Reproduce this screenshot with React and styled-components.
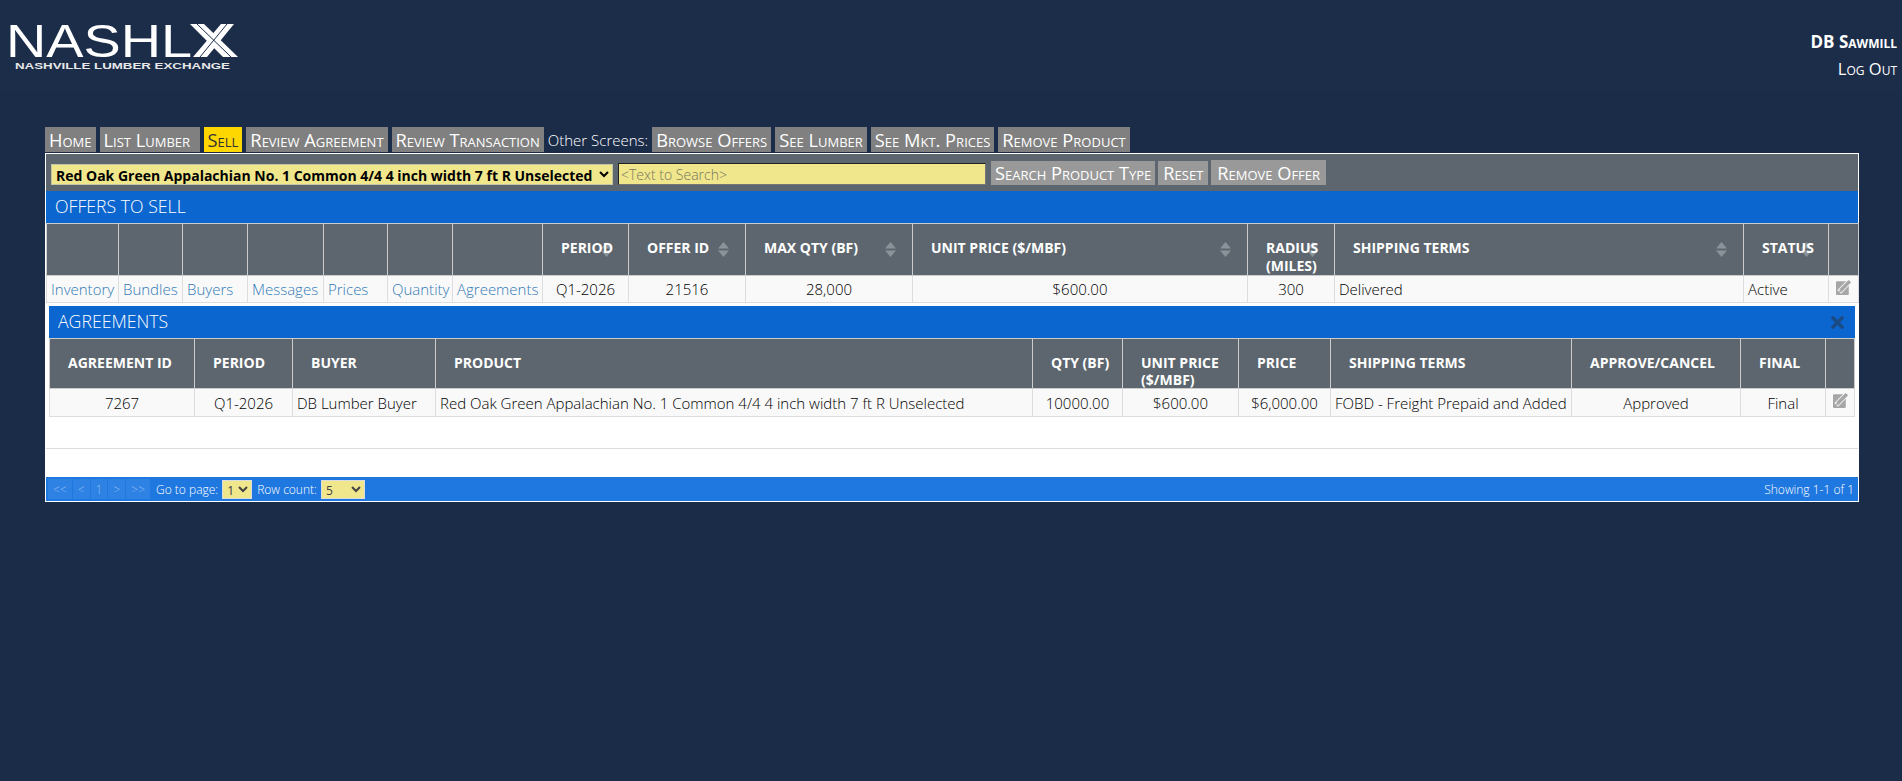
import React from 'react'
import styled, { createGlobalStyle } from 'styled-components'
import { FaTimes } from 'react-icons/fa'

const GlobalStyle = createGlobalStyle`
  html, body {
    margin: 0;
    padding: 0;
    height: 100%;
    background: #1b2c48;
  }
  body {
    font-family: "Open Sans", "Liberation Sans", sans-serif;
    font-size: 14px;
    color: #222;
  }
`

const Page = styled.div`
  min-height: 781px;
  background: #1b2c48;
  overflow: hidden;
`

const Header = styled.header`
  height: 92px;
  display: flex;
  justify-content: space-between;
  background: #1c2d4a;
`

const LogoWrap = styled.div`
  padding: 24px 0 0 10px;
  display: flex;
  flex-direction: column;
  gap: 4px;
`

const UserBox = styled.div`
  padding: 31px 5px 0 0;
  text-align: right;
  color: #fff;
  font-variant: small-caps;
`

const UserName = styled.div`
  font-size: 17px;
  font-weight: 700;
  line-height: 22px;
`

const LogOut = styled.div`
  font-size: 16.5px;
  font-weight: 400;
  line-height: 24px;
  margin-top: 4px;
`

const Content = styled.main`
  padding: 35px 43px 0 45px;
`

const Tabs = styled.nav`
  display: flex;
  align-items: stretch;
  gap: 4px;
  height: 25px;
  margin-bottom: 1px;
`

const Tab = styled.a`
  display: block;
  padding: 0 4px;
  min-width: ${p => p.$w || 0}px;
  box-sizing: border-box;
  background: ${p => (p.$active ? '#ffd700' : '#808080')};
  color: ${p => (p.$active ? '#333' : '#fff')};
  font-size: 18.3px;
  font-weight: 400;
  line-height: 26px;
  font-variant: small-caps;
  white-space: nowrap;
`

const TabLabel = styled.span`
  color: #fff;
  font-size: 15px;
  font-weight: 300;
  line-height: 27px;
  white-space: nowrap;
`

const Panel = styled.section`
  border: 1px solid #fff;
  background: #fff;
`

const Toolbar = styled.div`
  height: 37px;
  box-sizing: border-box;
  padding: 6px 0 6px 5px;
  display: flex;
  align-items: flex-end;
  background: #5d666e;
`

const ProductSelect = styled.select`
  width: 562px;
  height: 21px;
  margin: 0 5px 0 0;
  padding: 0;
  border: 1px solid #c5c5a5;
  border-radius: 0;
  background: #f0e68c;
  color: #000;
  font-family: inherit;
  font-size: 14px;
  font-weight: 700;
`

const SearchInput = styled.input`
  width: 368px;
  height: 22px;
  box-sizing: border-box;
  margin: 0 5px 0 0;
  padding: 0 2px;
  border: 1px solid #777;
  border-top-color: #222;
  border-left-color: #222;
  background: #f0e68c;
  font-family: inherit;
  font-size: 14px;
  font-weight: 300;
  &::placeholder {
    color: #77775f;
    opacity: 1;
  }
`

const ToolButton = styled.button`
  height: ${p => (p.$tall ? 25 : 24)}px;
  margin: 0 3px 0 0;
  padding: 0 ${p => p.$pad || 4}px;
  border: 0;
  background: #999;
  color: #fff;
  font-family: inherit;
  font-size: 18.2px;
  font-weight: 400;
  font-variant: small-caps;
  white-space: nowrap;
`

const TitleBar = styled.div`
  height: 32px;
  padding: 0 ${p => p.$right || 0}px 3px 9px;
  margin: ${p => p.$margin || 0};
  box-sizing: border-box;
  display: flex;
  align-items: center;
  justify-content: space-between;
  background: #0b66d0;
  color: #fff;
  font-size: 17.7px;
  font-weight: 300;
`

const CloseIcon = styled(FaTimes)`
  color: #1b4b86;
  font-size: 19px;
  margin-top: 3px;
`

const Table = styled.table`
  width: ${p => p.$w}px;
  table-layout: fixed;
  border-collapse: collapse;
  margin-left: ${p => p.$left || 0}px;
`

const Th = styled.th`
  position: relative;
  height: ${p => (p.$compact ? 50 : 51)}px;
  box-sizing: border-box;
  padding: 15px 0 0 18px;
  vertical-align: top;
  border: 1px solid #ccc;
  background: #5d666e;
  color: #fff;
  font-size: 14px;
  font-weight: 700;
  line-height: ${p => (p.$compact ? 17 : 18)}px;
  text-align: left;
  text-transform: uppercase;
`

const HeadText = styled.span`
  position: relative;
  z-index: 1;
`

const Td = styled.td`
  height: ${p => (p.$tall ? 28 : 27)}px;
  box-sizing: border-box;
  padding: 0 4px;
  border: 1px solid #ddd;
  background: #f9f9f9;
  color: #000;
  font-size: 15px;
  font-weight: 300;
  line-height: 20px;
  text-align: ${p => (p.$center ? 'center' : 'left')};
  white-space: nowrap;
  overflow: hidden;
`

const LinkCell = styled.a`
  color: #337ab7;
`

const EditSvg = styled.svg`
  display: block;
  width: 16px;
  height: 16px;
  margin: -5px 0 0 3px;
`

const SortArrows = styled.svg`
  position: absolute;
  right: 16px;
  top: 18px;
  width: 11px;
  height: 15px;
  fill: #8b939a;
`

const Spacer = styled.div`
  height: 31px;
  border-bottom: 1px solid #ddd;
  margin: 0 0 28px 0;
`

const DetailWrap = styled.div`
  padding-top: 3px;
`

const Pager = styled.div`
  height: 24px;
  padding: 0 4px 0 2px;
  display: flex;
  align-items: center;
  background: #1f78df;
  color: #fff;
  font-size: 12px;
  font-weight: 300;
`

const PageBtn = styled.span`
  height: 20px;
  padding: 0 5px;
  margin-right: 1px;
  display: flex;
  align-items: center;
  background: #2d82e4;
  color: #8fbcf0;
  font-size: 12px;
`

const PagerLabel = styled.span`
  margin: 0 4px 0 ${p => p.$left || 0}px;
`

const PagerSelect = styled.select`
  width: ${p => p.$w}px;
  height: 19px;
  padding: 0;
  border: 1px solid #ddd;
  border-radius: 0;
  background: #f0e68c;
  color: #444;
  font-family: inherit;
  font-size: 12px;
`

const PagerEnd = styled.span`
  margin-left: auto;
`

const Sort = () => (
  <SortArrows viewBox="0 0 11 15">
    <path d="M5.5 0 L11 6.6 H0 Z M5.5 15 L0 8.4 H11 Z" />
  </SortArrows>
)

const EditIcon = () => (
  <EditSvg viewBox="0 0 15 15">
    <rect x="0" y="2" width="12" height="13" rx="1" fill="#a6a6a6" />
    <path d="M3 12 L12 3" stroke="#f0f0f0" strokeWidth="5" />
    <path d="M4.5 10.5 L13 2" stroke="#a6a6a6" strokeWidth="3.2" />
    <path d="M3 12.5 L3.5 9.5 L6 12 Z" fill="#a6a6a6" />
  </EditSvg>
)

const Logo = () => (
  <>
    <svg width="232" height="33" viewBox="0 0 232 33" overflow="visible">
      <text x="-4" y="33" fontFamily="Liberation Sans" fontSize="46" fill="#fff" textLength="186" lengthAdjust="spacingAndGlyphs">NASHL</text>
      <path d="M180 0 H194 L228 33 H213 Z" fill="#fff" />
      <path d="M211 0 H224 L197 33 H183 Z" fill="#fff" />
      <path d="M187 0 L221 33 M217 0 L190 33" stroke="#1c2d4a" strokeWidth="1" />
    </svg>
    <svg width="232" height="9" viewBox="0 0 232 9" overflow="visible">
      <text x="5" y="8" fontFamily="Liberation Sans" fontWeight="700" fontSize="9" fill="#e8e8e8" textLength="215" lengthAdjust="spacingAndGlyphs">NASHVILLE LUMBER EXCHANGE</text>
    </svg>
  </>
)

const offerCols = [72, 64, 65, 76, 64, 65, 90, 86, 117, 167, 335, 87, 409, 85, 30]
const agreementCols = [145, 98, 143, 597, 90, 116, 92, 241, 169, 85, 29]

const offerHeads = [
  { label: '' }, { label: '' }, { label: '' }, { label: '' }, { label: '' }, { label: '' }, { label: '' },
  { label: 'Period', sort: true }, { label: 'Offer ID', sort: true }, { label: 'Max Qty (BF)', sort: true },
  { label: 'Unit Price ($/MBF)', sort: true }, { label: 'Radius (Miles)', sort: true },
  { label: 'Shipping Terms', sort: true }, { label: 'Status', sort: true }, { label: '' },
]

const agreementHeads = [
  'Agreement ID', 'Period', 'Buyer', 'Product', 'Qty (BF)', 'Unit Price ($/MBF)', 'Price',
  'Shipping Terms', 'Approve/Cancel', 'Final', '',
]

const links = ['Inventory', 'Bundles', 'Buyers', 'Messages', 'Prices', 'Quantity', 'Agreements']

const Columns = ({ widths }) => (
  <colgroup>
    {widths.map((w, i) => <col key={i} style={{ width: w }} />)}
  </colgroup>
)

export default function App() {
  return (
    <Page>
      <GlobalStyle />
      <Header>
        <LogoWrap><Logo /></LogoWrap>
        <UserBox>
          <UserName>DB Sawmill</UserName>
          <LogOut>Log Out</LogOut>
        </UserBox>
      </Header>
      <Content>
        <Tabs>
          <Tab>Home</Tab>
          <Tab $w={100}>List Lumber</Tab>
          <Tab $active>Sell</Tab>
          <Tab>Review Agreement</Tab>
          <Tab>Review Transaction</Tab>
          <TabLabel>Other Screens:</TabLabel>
          <Tab>Browse Offers</Tab>
          <Tab>See Lumber</Tab>
          <Tab>See Mkt. Prices</Tab>
          <Tab>Remove Product</Tab>
        </Tabs>
        <Panel>
          <Toolbar>
            <ProductSelect defaultValue="a">
              <option value="a">Red Oak Green Appalachian No. 1 Common 4/4 4 inch width 7 ft R Unselected</option>
            </ProductSelect>
            <SearchInput placeholder="<Text to Search>" />
            <ToolButton>Search Product Type</ToolButton>
            <ToolButton $pad={5}>Reset</ToolButton>
            <ToolButton $tall $pad={6}>Remove Offer</ToolButton>
          </Toolbar>
          <TitleBar>OFFERS TO SELL</TitleBar>
          <Table $w={1812}>
            <Columns widths={offerCols} />
            <thead>
              <tr>
                {offerHeads.map((h, i) => (
                  <Th key={i}>{h.sort && <Sort />}<HeadText>{h.label}</HeadText></Th>
                ))}
              </tr>
            </thead>
            <tbody>
              <tr>
                {links.map(l => <Td key={l}><LinkCell>{l}</LinkCell></Td>)}
                <Td $center>Q1-2026</Td>
                <Td $center>21516</Td>
                <Td $center>28,000</Td>
                <Td $center>$600.00</Td>
                <Td $center>300</Td>
                <Td>Delivered</Td>
                <Td>Active</Td>
                <Td><EditIcon /></Td>
              </tr>
            </tbody>
          </Table>
          <DetailWrap>
            <TitleBar $right={8} $margin="0 3px">
              AGREEMENTS
              <CloseIcon />
            </TitleBar>
            <Table $w={1806} $left={3}>
              <Columns widths={agreementCols} />
              <thead>
                <tr>
                  {agreementHeads.map((h, i) => <Th key={i} $compact>{h}</Th>)}
                </tr>
              </thead>
              <tbody>
                <tr>
                  <Td $tall $center>7267</Td>
                  <Td $tall $center>Q1-2026</Td>
                  <Td $tall>DB Lumber Buyer</Td>
                  <Td $tall>Red Oak Green Appalachian No. 1 Common 4/4 4 inch width 7 ft R Unselected</Td>
                  <Td $tall $center>10000.00</Td>
                  <Td $tall $center>$600.00</Td>
                  <Td $tall $center>$6,000.00</Td>
                  <Td $tall>FOBD - Freight Prepaid and Added</Td>
                  <Td $tall $center>Approved</Td>
                  <Td $tall $center>Final</Td>
                  <Td $tall><EditIcon /></Td>
                </tr>
              </tbody>
            </Table>
            <Spacer />
          </DetailWrap>
          <Pager>
            <PageBtn>&lt;&lt;</PageBtn>
            <PageBtn>&lt;</PageBtn>
            <PageBtn>1</PageBtn>
            <PageBtn>&gt;</PageBtn>
            <PageBtn>&gt;&gt;</PageBtn>
            <PagerLabel $left={5}>Go to page:</PagerLabel>
            <PagerSelect $w={30} defaultValue="1"><option>1</option></PagerSelect>
            <PagerLabel $left={5}>Row count:</PagerLabel>
            <PagerSelect $w={44} defaultValue="5"><option>5</option></PagerSelect>
            <PagerEnd>Showing 1-1 of 1</PagerEnd>
          </Pager>
        </Panel>
      </Content>
    </Page>
  )
}
